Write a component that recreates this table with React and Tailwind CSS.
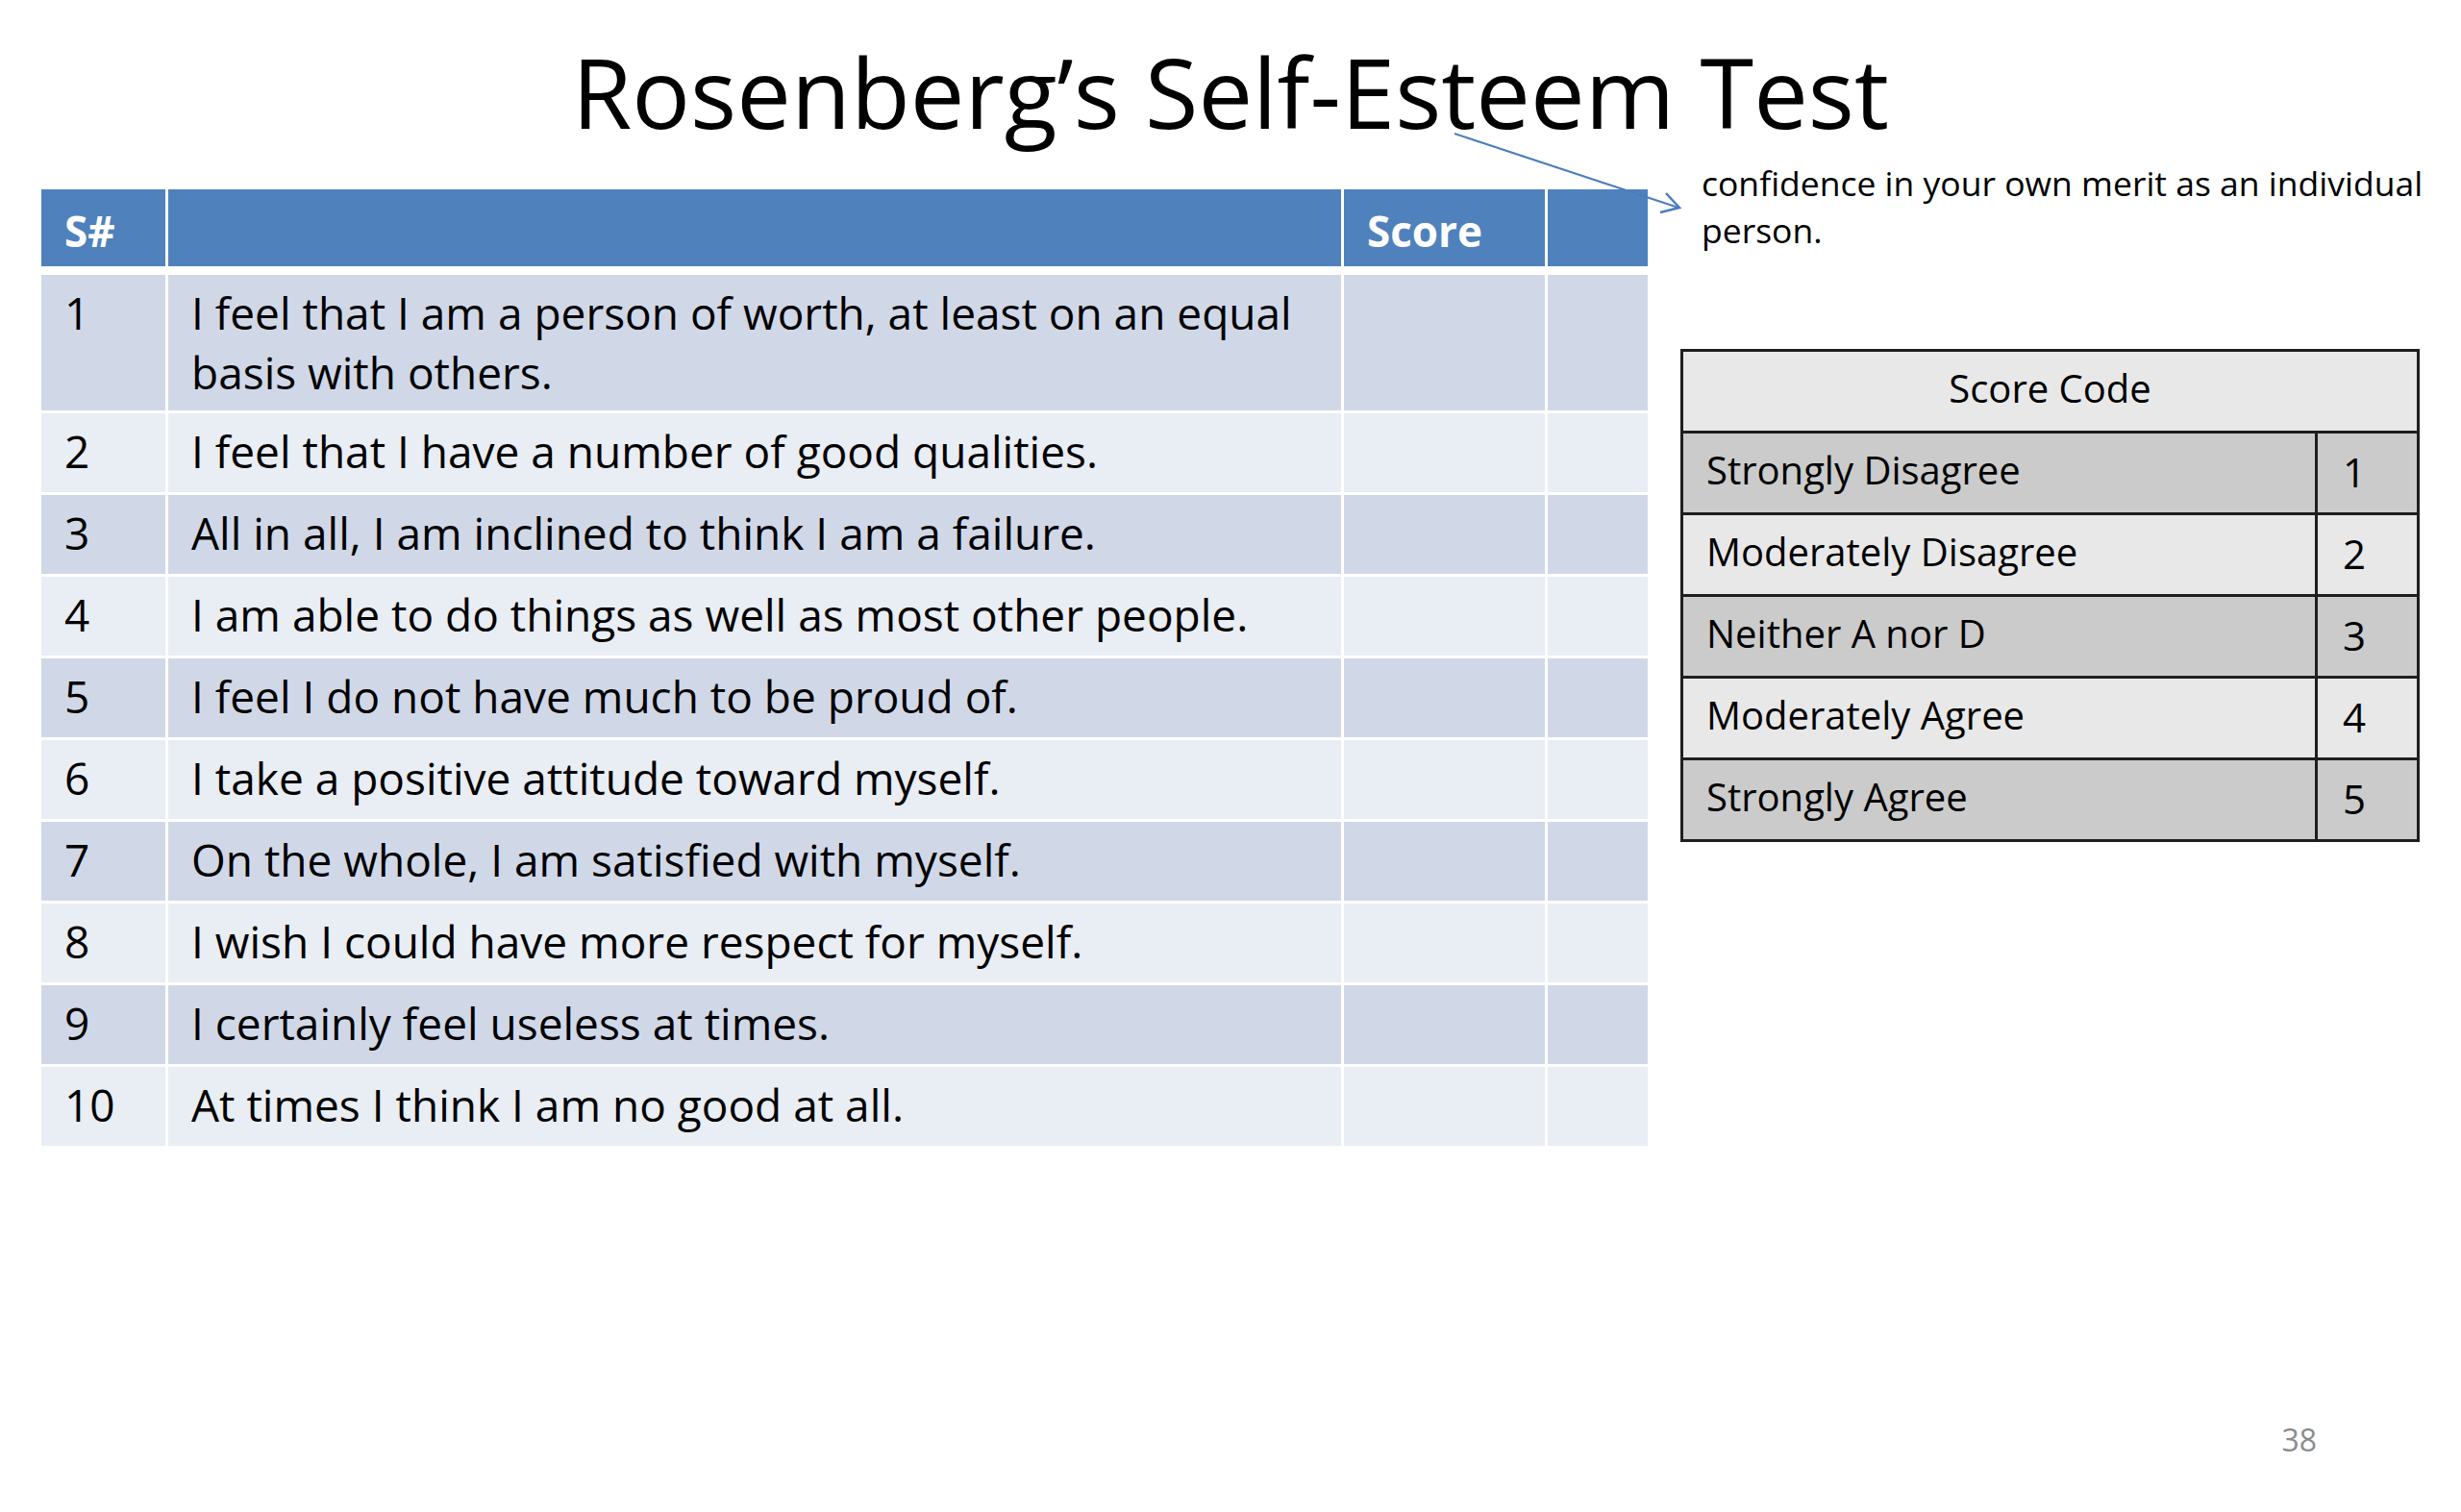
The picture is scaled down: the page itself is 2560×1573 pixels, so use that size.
import React from 'react';

const items = [
  'I feel that I am a person of worth, at least on an equal basis with others.',
  'I feel that I have a number of good qualities.',
  'All in all, I am inclined to think I am a failure.',
  'I am able to do things as well as most other people.',
  'I feel I do not have much to be proud of.',
  'I take a positive attitude toward myself.',
  'On the whole, I am satisfied with myself.',
  'I wish I could have more respect for myself.',
  'I certainly feel useless at times.',
  'At times I think I am no good at all.',
];

const codes = [
  ['Strongly Disagree', 1],
  ['Moderately Disagree', 2],
  ['Neither A nor D', 3],
  ['Moderately Agree', 4],
  ['Strongly Agree', 5],
];

function QuestionTable() {
  return (
    <div className="mt-[31px] w-[1671px] flex flex-col gap-y-[3px]">
      {/* Header */}
      <div className="grid grid-cols-[129px_1220px_209px_104px] gap-x-[3px] h-[80px] mb-[6px] bg-white text-white font-bold text-[44px] leading-none">
        <div className="bg-[#4f81bd] flex items-center pl-[24px] pt-[6px]">S#</div>
        <div className="bg-[#4f81bd]"></div>
        <div className="bg-[#4f81bd] flex items-center pl-[24px] pt-[6px]">Score</div>
        <div className="bg-[#4f81bd]"></div>
      </div>

      {items.map((text, i) => {
        const bg = i % 2 === 0 ? 'bg-[#d0d8e8]' : 'bg-[#e9edf4]';
        const h = i === 0 ? 'h-[141px]' : 'h-[82px]';
        return (
          <div key={i} className={`grid grid-cols-[129px_1220px_209px_104px] gap-x-[3px] text-[46px] leading-[62px] ${h}`}>
            <div className={`${bg} pl-[24px] pt-[8px]`}>{i + 1}</div>
            <div className={`${bg} pl-[24px] pr-[16px] pt-[8px]`}>{text}</div>
            <div className={bg}></div>
            <div className={bg}></div>
          </div>
        );
      })}
    </div>
  );
}

function ScoreCode() {
  return (
    <div className="mt-[99px] w-[769px] border-[3px] border-[#1e1e1e] text-[40px] leading-none">
      <div className="h-[82px] pb-[6px] bg-[#e8e8e8] flex items-center justify-center">Score Code</div>
      {codes.map(([label, n], i) => (
        <div
          key={label}
          className={`grid grid-cols-[1fr_106px] h-[85px] border-t-[3px] border-[#1e1e1e] ${i % 2 === 0 ? 'bg-[#cbcbcb]' : 'bg-[#e8e8e8]'}`}
        >
          <div className="flex items-center pl-[24px] pb-[6px]">{label}</div>
          <div className="flex items-center pl-[26px] pb-[2px] text-[42px] border-l-[3px] border-[#1e1e1e]">{n}</div>
        </div>
      ))}
    </div>
  );
}

export default function App() {
  return (
    <div className="relative w-[2560px] h-[1573px] bg-white overflow-hidden flex flex-col text-black font-['Open_Sans',sans-serif]">
      <h1 className="pt-[45px] text-center text-[101px] leading-none font-normal">Rosenberg’s Self-Esteem Test</h1>

      <div className="mt-[20px] flex items-start pl-[43px]">
        <QuestionTable />

        <div className="ml-[34px] flex flex-col">
          <p className="pl-[22px] text-[35.5px] leading-[49px] whitespace-nowrap">
            confidence in your own merit as an individual
            <br />
            person.
          </p>
          <ScoreCode />
        </div>
      </div>

      {/* Slide number */}
      <div className="mt-auto flex justify-end pr-[150px] pb-[59px] text-[32px] leading-none text-[#8c8c8c]">38</div>

      {/* Callout arrow drawn over the table */}
      <svg className="absolute inset-0 pointer-events-none" width="2560" height="1573" viewBox="0 0 2560 1573" fill="none">
        <line x1="1513" y1="139" x2="1746" y2="216" stroke="#4a7ebb" strokeWidth="2" />
        <polyline points="1733,201 1747,216 1727,221" stroke="#4a7ebb" strokeWidth="2.5" strokeLinejoin="miter" />
      </svg>
    </div>
  );
}
